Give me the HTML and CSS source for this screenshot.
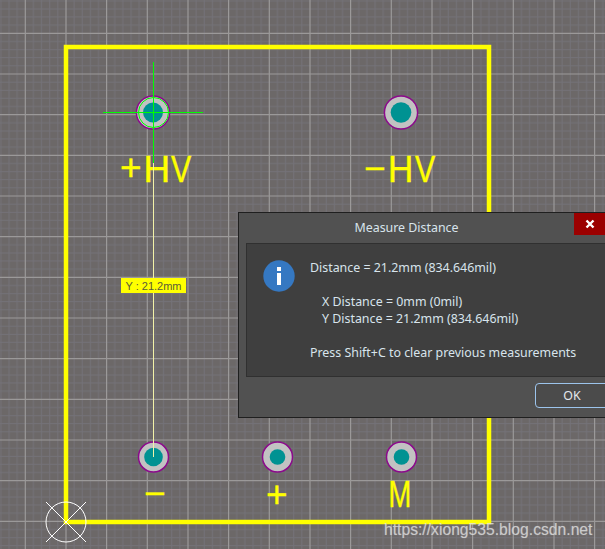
FILE: index.html
```html
<!DOCTYPE html>
<html lang="en">
<head>
<meta charset="utf-8">
<title>Measure Distance</title>
<link rel="stylesheet" href="styles.css">
</head>
<body>
<main class="canvas">
  <svg class="board" width="605" height="549" viewBox="0 0 605 549" xmlns="http://www.w3.org/2000/svg">
    <defs>
      <pattern id="grid" x="25.3" y="33.3" width="40.67" height="40.67" patternUnits="userSpaceOnUse">
        <path class="minor" d="M8.13 0V40.67M16.27 0V40.67M24.4 0V40.67M32.53 0V40.67M0 8.13H40.67M0 16.27H40.67M0 24.4H40.67M0 32.53H40.67"/>
      </pattern>
    </defs>
    <rect class="grid-fill" width="605" height="549"/>
    <path class="major" d="M25.3 0V549M66 0V549M106.6 0V549M147.3 0V549M188 0V549M228.6 0V549M269.3 0V549M310 0V549M350.6 0V549M391.3 0V549M432 0V549M472.6 0V549M513.3 0V549M554 0V549M594.6 0V549M0 33.3H605M0 74H605M0 114.6H605M0 155.3H605M0 196H605M0 236.6H605M0 277.3H605M0 318H605M0 358.6H605M0 399.3H605M0 440H605M0 480.6H605M0 521.3H605"/>
    <rect class="outline" x="66" y="47" width="423" height="475"/>

    <g class="pad"><circle class="pad-ring" cx="153" cy="112.5" r="16.6"/><circle class="pad-hole" cx="153" cy="112.5" r="10"/></g>
    <g class="pad"><circle class="pad-ring" cx="401" cy="112.5" r="16.6"/><circle class="pad-hole" cx="401" cy="112.5" r="10.3"/></g>
    <g class="pad"><circle class="pad-ring" cx="153.500" cy="457" r="15"/><circle class="pad-hole" cx="153.500" cy="457" r="9.300"/></g>
    <g class="pad"><circle class="pad-ring" cx="277.500" cy="457" r="15"/><circle class="pad-hole" cx="277.500" cy="457" r="7.800"/></g>
    <g class="pad"><circle class="pad-ring" cx="401.500" cy="457" r="15"/><circle class="pad-hole" cx="401.500" cy="457" r="7.800"/></g>

    <text class="silk" transform="translate(120 180)">+</text>
    <text class="silk" transform="translate(143.500 182)">H</text>
    <text class="silk" transform="translate(171 182) scale(.82 1)">V</text>
    <text class="silk" transform="translate(364 180.500)">−</text>
    <text class="silk" transform="translate(388 182) scale(.95 1)">H</text>
    <text class="silk" transform="translate(415 182) scale(.82 1)">V</text>
    <text class="silk" transform="translate(144 505.500)">−</text>
    <text class="silk" transform="translate(266 506.500)">+</text>
    <text class="silk" transform="translate(388.500 507) scale(.74 1)">M</text>

    <path class="measure" d="M153.500 163V457"/>
    <path class="cross" d="M153.500 62V163M103 112.500H203"/>
    <circle class="cross" cx="153.500" cy="112.500" r="15"/>

    <g class="origin">
      <circle cx="66" cy="522" r="20"/>
      <path d="M46 502L86 542M86 502L46 542"/>
    </g>

    <rect class="tag" x="121" y="278" width="65" height="15"/>
    <text class="tag-text" x="153.500" y="289.500">Y : 21.2mm</text>
  </svg>

  <section class="dialog">
    <header class="title-bar">
      <h1 class="title">Measure Distance</h1>
      <button class="close" type="button" aria-label="Close">
        <svg width="10" height="10" viewBox="0 0 10 10" xmlns="http://www.w3.org/2000/svg"><path class="close-x" d="M1.500 1.500L8.500 8.500M8.500 1.500L1.500 8.500"/></svg>
      </button>
    </header>
    <div class="panel">
      <svg class="info" width="32" height="32" viewBox="0 0 32 32" xmlns="http://www.w3.org/2000/svg">
        <circle class="info-disc" cx="16" cy="16" r="15.700"/>
        <rect class="info-mark" x="14" y="7" width="4" height="4"/>
        <rect class="info-mark" x="14" y="13" width="4" height="12"/>
      </svg>
      <div class="message">
        <p>Distance = 21.2mm (834.646mil)</p>
        <p class="axes">X Distance = 0mm (0mil)<br>Y Distance = 21.2mm (834.646mil)</p>
        <p>Press Shift+C to clear previous measurements</p>
      </div>
    </div>
    <footer class="actions">
      <button class="ok" type="button">OK</button>
    </footer>
  </section>

  <div class="watermark">https://xiong535.blog.csdn.net</div>
</main>
</body>
</html>
```
FILE: styles.css
```css
html, body {
  margin: 0;
  padding: 0;
  background: #6c6868;
}

.canvas {
  position: relative;
  width: 605px;
  height: 549px;
  overflow: hidden;
}

.board {
  display: block;
}

.grid-fill {
  fill: url(#grid);
  stroke: none;
}

.minor {
  fill: none;
  stroke: #747278;
  stroke-width: 1;
}

.major {
  fill: none;
  stroke: #9b9999;
  stroke-width: 1.2;
}

.outline {
  fill: none;
  stroke: #ffff00;
  stroke-width: 4.500;
}

.pad-ring {
  fill: #c2c2c2;
  stroke: #8c0a8c;
  stroke-width: 1.500;
}

.pad-hole {
  fill: #009292;
}

.silk {
  font-family: "Liberation Sans", Arial, sans-serif;
  font-size: 37px;
  fill: #ffff00;
  stroke: #ffff00;
  stroke-width: .4;
}

.measure {
  fill: none;
  stroke: #f2f2a8;
  stroke-width: 1;
}

.cross {
  fill: none;
  stroke: #00ff00;
  stroke-width: 1;
}

.origin {
  fill: none;
  stroke: #ffffff;
  stroke-width: 1;
}

.tag {
  fill: #ffff00;
}

.tag-text {
  font-family: "Liberation Sans", Arial, sans-serif;
  font-size: 11px;
  fill: #5b5b3a;
  text-anchor: middle;
}

.dialog {
  position: absolute;
  left: 238px;
  top: 212px;
  width: 376px;
  height: 206px;
  box-sizing: border-box;
  display: flex;
  flex-direction: column;
  background: #515151;
  border: 1px solid #1f1f1f;
  font-family: "Noto Sans", sans-serif;
  font-size: 12.400px;
  color: #d8e4ec;
}

.title-bar {
  position: relative;
  height: 30px;
  flex: none;
}

.title {
  margin: 0;
  width: 335px;
  font-size: 12.400px;
  font-weight: 400;
  line-height: 30px;
  text-align: center;
}

.close {
  position: absolute;
  right: 8px;
  top: 0;
  width: 31px;
  height: 22px;
  padding: 0;
  border: 0;
  background: #9b0000;
  display: flex;
  align-items: center;
  justify-content: center;
}

.close-x {
  fill: none;
  stroke: #ffffff;
  stroke-width: 2.400;
}

.panel {
  margin: 0 0 0 7px;
  height: 134px;
  box-sizing: border-box;
  display: flex;
  gap: 15px;
  padding: 15px 0 0 16px;
  background: #3f3f3f;
  border: 1px solid #303030;
}

.info {
  flex: none;
  margin-top: 1px;
}

.info-disc {
  fill: #3578c2;
}

.info-mark {
  fill: #ffffff;
}

.message {
  line-height: 17px;
}

.message p {
  margin: 0 0 17px;
  white-space: nowrap;
}

.axes {
  padding-left: 12px;
}

.actions {
  display: flex;
  justify-content: flex-end;
  padding: 6px 4px 0 0;
}

.ok {
  width: 74px;
  height: 25px;
  padding: 0;
  box-sizing: border-box;
  background: #4b4b4b;
  border: 1px solid #9cc4ec;
  border-radius: 4px;
  color: #e4e8ec;
  font: inherit;
}

.watermark {
  position: absolute;
  left: 384px;
  top: 521px;
  font-family: "Liberation Sans", Arial, sans-serif;
  font-size: 15.700px;
  line-height: 18px;
  color: rgba(226, 226, 226, .72);
  text-shadow: 0 0 1px rgba(226, 226, 226, .4);
  white-space: nowrap;
}
```
